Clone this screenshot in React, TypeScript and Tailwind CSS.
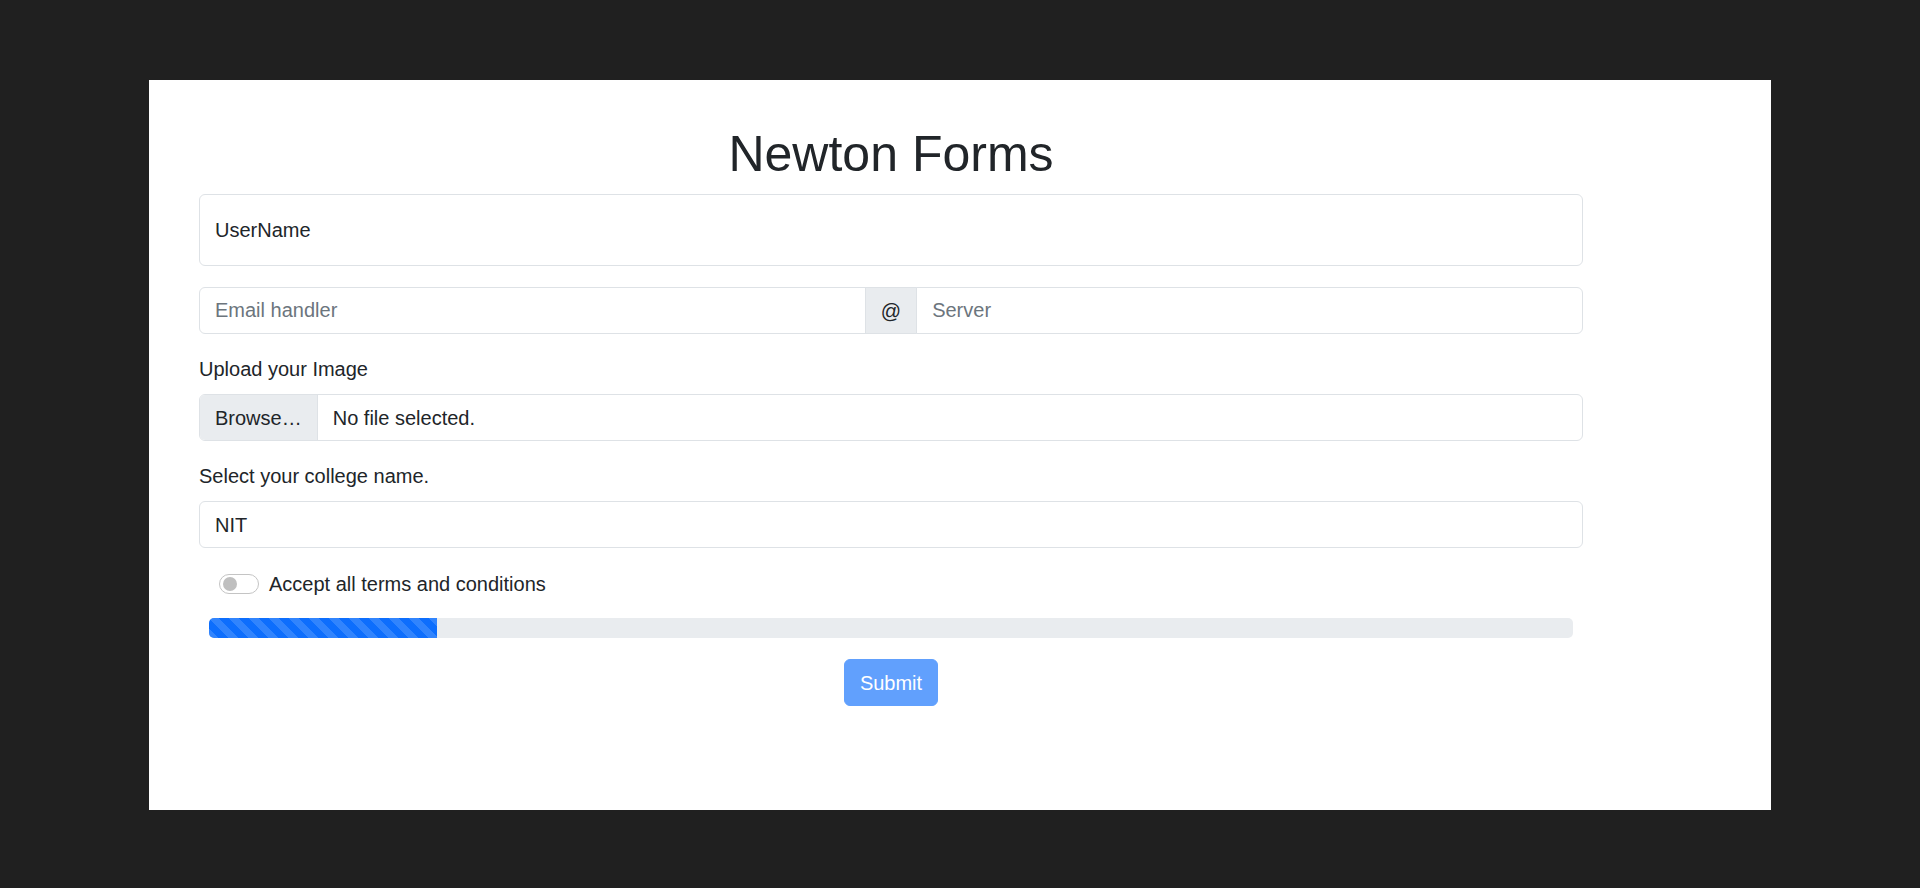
import { useState } from "react";

// Simple registration form card on a dark page background.
// Sizes follow a Bootstrap-like scale with a 20px base font.

const FONT = "font-['Liberation_Sans',Arial,sans-serif]";

const STRIPES =
  "bg-[linear-gradient(45deg,rgba(255,255,255,.15)_25%,transparent_25%,transparent_50%,rgba(255,255,255,.15)_50%,rgba(255,255,255,.15)_75%,transparent_75%,transparent)] bg-[length:20px_20px]";

function Field({ placeholder, value, className = "" }: { placeholder?: string; value?: string; className?: string }) {
  return (
    <input
      readOnly
      placeholder={placeholder}
      defaultValue={value}
      className={`block min-w-0 border border-[#dee2e6] bg-white px-[15px] text-[20px] leading-[30px] text-[#212529] outline-none placeholder:text-[#6c757d] ${className}`}
    />
  );
}

export default function App() {
  const [accepted, setAccepted] = useState(false);

  return (
    <div className={`min-h-screen bg-[#202020] pt-[80px] ${FONT}`}>
      <div className="mx-auto h-[730px] w-[1622px] bg-white pl-[50px] pt-[44px] text-[#212529]">
        <form className="w-[1384px]" onSubmit={(e) => e.preventDefault()}>
          <h1 className="mb-[10px] text-center text-[50px] leading-[60px] font-normal">Newton Forms</h1>

          {/* user name */}
          <Field value="UserName" className="mb-[21px] h-[72px] w-full rounded-[6px]" />

          {/* email handler @ server */}
          <div className="mb-[20px] flex h-[47px]">
            <Field placeholder="Email handler" className="h-full flex-1 rounded-l-[6px]" />
            <span className="-mx-px flex h-full items-center border border-[#dee2e6] bg-[#e9ecef] px-[15px] text-[20px]">
              @
            </span>
            <Field placeholder="Server" className="h-full flex-1 rounded-r-[6px]" />
          </div>

          <label className="mb-[10px] block text-[20px] leading-[30px]">Upload your Image</label>
          <div className="mb-[20px] flex h-[47px] overflow-hidden rounded-[6px] border border-[#dee2e6] text-[20px]">
            <span className="flex items-center border-r border-[#dee2e6] bg-[#e9ecef] px-[15px]">Browse…</span>
            <span className="flex items-center px-[15px]">No file selected.</span>
          </div>

          <label className="mb-[10px] block text-[20px] leading-[30px]">Select your college name.</label>
          <div className="mb-[21px] flex h-[47px] items-center rounded-[6px] border border-[#dee2e6] px-[15px] text-[20px]">
            NIT
          </div>

          {/* terms switch */}
          <label className="mb-[19px] ml-[20px] flex h-[30px] cursor-pointer items-center gap-[10px] text-[20px]">
            <span
              onClick={() => setAccepted(!accepted)}
              className={`flex h-[20px] w-[40px] items-center rounded-full border px-[3px] ${
                accepted ? "justify-end border-[#0d6efd] bg-[#0d6efd]" : "border-[#c4c4c4] bg-white"
              }`}
            >
              <span className={`h-[14px] w-[14px] rounded-full ${accepted ? "bg-white" : "bg-[#bfbfbf]"}`} />
            </span>
            Accept all terms and conditions
          </label>

          {/* progress */}
          <div className="mx-[10px] mb-[21px] h-[20px] overflow-hidden rounded-[5px] bg-[#e9ecef]">
            <div className={`h-full w-[16.7%] bg-[#0d6efd] ${STRIPES}`} />
          </div>

          <div className="flex justify-center">
            <button
              type="submit"
              disabled
              className="h-[47px] rounded-[6px] border border-[#0d6efd] bg-[#0d6efd] px-[15px] text-[20px] text-white opacity-65"
            >
              Submit
            </button>
          </div>
        </form>
      </div>
    </div>
  );
}
